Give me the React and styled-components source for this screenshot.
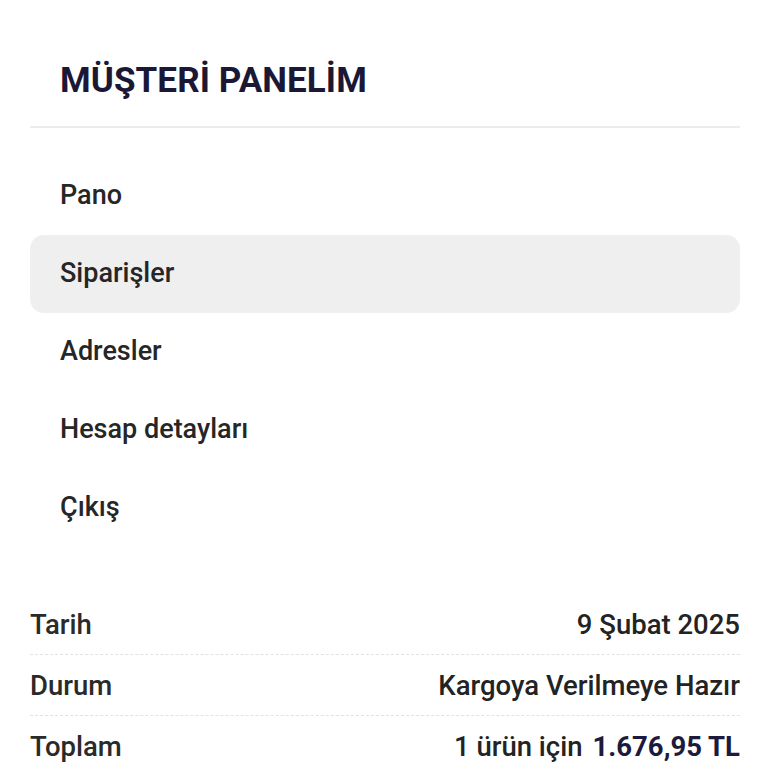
import React from 'react';
import styled, { createGlobalStyle } from 'styled-components';

const GlobalStyle = createGlobalStyle`
    html, body {
        margin: 0;
        padding: 0;
        background: #fff;
    }

    body {
        font-family: Roboto, "Noto Sans", "Liberation Sans", sans-serif;
        -webkit-font-smoothing: antialiased;
    }
`;

const Page = styled.div`
    padding: 60px 28px 0 30px;
    overflow: hidden;
`;

const PanelHeader = styled.div`
    padding: 0 30px 25px;
    border-bottom: 2px solid #ececec;
`;

const PanelTitle = styled.h1`
    margin: 0;
    font-size: 35px;
    line-height: 41px;
    font-weight: 700;
    color: #1b1836;
    letter-spacing: 0.1px;
`;

const Menu = styled.nav`
    display: flex;
    flex-direction: column;
    padding-top: 29px;
`;

const MenuItem = styled.a`
    display: flex;
    align-items: center;
    height: 78px;
    padding: 0 30px 2px;
    box-sizing: border-box;
    border-radius: 14px;
    font-size: 27px;
    font-weight: 500;
    color: #262626;
    text-decoration: none;
    background: ${props => (props.$active ? '#efefef' : 'transparent')};
`;

const OrderInfo = styled.dl`
    margin: 47px 0 0;
    display: flex;
    flex-direction: column;
`;

const InfoRow = styled.div`
    display: flex;
    justify-content: space-between;
    align-items: center;
    height: 60px;
    border-bottom: ${props => (props.$last ? 'none' : '1px dashed #e2e2e2')};
`;

const InfoLabel = styled.dt`
    font-size: 27.5px;
    font-weight: 500;
    color: #2a2a2a;
`;

const InfoValue = styled.dd`
    margin: 0;
    font-size: 27.5px;
    font-weight: 500;
    color: #232323;
    display: flex;
    gap: 10px;
`;

const Amount = styled.span`
    font-weight: ${props => (props.$strong ? 700 : 500)};
    color: ${props => (props.$strong ? '#1c1a3d' : '#232323')};
`;

const menuItems = ['Pano', 'Siparişler', 'Adresler', 'Hesap detayları', 'Çıkış'];

function App() {
    return (
        <>
            <GlobalStyle />
            <Page>
                <PanelHeader>
                    <PanelTitle>MÜŞTERİ PANELİM</PanelTitle>
                </PanelHeader>

                <Menu>
                    {menuItems.map(item => (
                        <MenuItem key={item} $active={item === 'Siparişler'}>{item}</MenuItem>
                    ))}
                </Menu>

                <OrderInfo>
                    <InfoRow>
                        <InfoLabel>Tarih</InfoLabel>
                        <InfoValue>9 Şubat 2025</InfoValue>
                    </InfoRow>
                    <InfoRow>
                        <InfoLabel>Durum</InfoLabel>
                        <InfoValue>Kargoya Verilmeye Hazır</InfoValue>
                    </InfoRow>
                    <InfoRow $last>
                        <InfoLabel>Toplam</InfoLabel>
                        <InfoValue>
                            <Amount>1 ürün için</Amount>
                            <Amount $strong>1.676,95 TL</Amount>
                        </InfoValue>
                    </InfoRow>
                </OrderInfo>
            </Page>
        </>
    );
}

export default App;
